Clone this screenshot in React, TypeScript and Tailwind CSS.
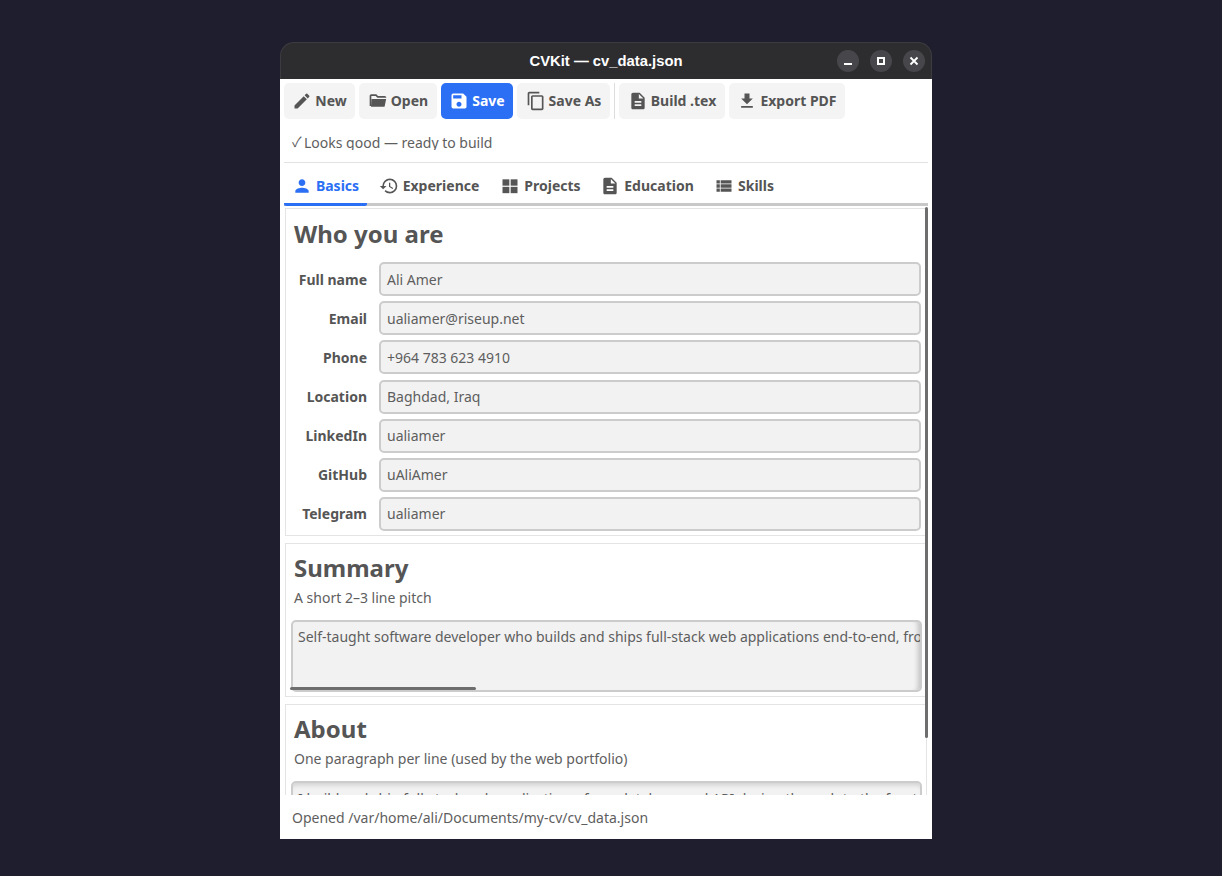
import React from 'react'
import {
  MdEdit,
  MdSave,
  MdContentCopy,
  MdDescription,
  MdFileDownload,
  MdPerson,
  MdHistory,
  MdViewList,
} from 'react-icons/md'

function FolderIcon({ className }: { className?: string }) {
  return (
    <svg viewBox="0 0 24 24" fill="currentColor" className={className}>
      <path d="M4 4h6l2 2h8c1.1 0 2 .9 2 2H11.2L9.2 6H4v12L2 18V6c0-1.1.9-2 2-2z" />
      <path d="M4.2 9.5h17.6L20 18.2c-.1.6-.6.8-1 .8H3.6z" />
    </svg>
  )
}

function GridIcon({ className }: { className?: string }) {
  return (
    <svg viewBox="0 0 24 24" fill="currentColor" className={className}>
      <rect x="3" y="4" width="8.2" height="7.6" />
      <rect x="12.8" y="4" width="8.2" height="7.6" />
      <rect x="3" y="13" width="8.2" height="7.6" />
      <rect x="12.8" y="13" width="8.2" height="7.6" />
    </svg>
  )
}

const toolbar = [
  { label: 'New', icon: MdEdit, w: 'w-[71px]' },
  { label: 'Open', icon: FolderIcon, w: 'w-[78px]' },
  { label: 'Save', icon: MdSave, w: 'w-[72px]', primary: true },
  { label: 'Save As', icon: MdContentCopy, w: 'w-[93px]' },
]

const toolbar2 = [
  { label: 'Build .tex', icon: MdDescription, w: 'w-[106px]' },
  { label: 'Export PDF', icon: MdFileDownload, w: 'w-[116px]' },
]

const tabs = [
  { label: 'Basics', icon: MdPerson, active: true, w: 'w-[83px]' },
  { label: 'Experience', icon: MdHistory, w: 'w-[124px]' },
  { label: 'Projects', icon: GridIcon, w: 'w-[99px]' },
  { label: 'Education', icon: MdDescription, w: 'w-[114px]' },
  { label: 'Skills', icon: MdViewList, w: 'w-[80px]' },
]

const fields = [
  ['Full name', 'Ali Amer'],
  ['Email', 'ualiamer@riseup.net'],
  ['Phone', '+964 783 623 4910'],
  ['Location', 'Baghdad, Iraq'],
  ['LinkedIn', 'ualiamer'],
  ['GitHub', 'uAliAmer'],
  ['Telegram', 'ualiamer'],
]

function ToolButton({ label, icon: Icon, w, primary }: { label: string; icon: React.ComponentType<{ className?: string }>; w: string; primary?: boolean }) {
  return (
    <div
      className={`${w} h-9 rounded-[5px] flex items-center justify-center gap-[3px] text-sm font-bold ${
        primary ? 'bg-[#2b6ff5] text-white' : 'bg-[#f4f4f4] text-[#555555]'
      }`}
    >
      <Icon className="w-5 h-5 shrink-0" />
      <span>{label}</span>
    </div>
  )
}

function WinButton({ children }: { children: React.ReactNode }) {
  return <div className="w-[22px] h-[22px] rounded-full bg-[#47474b] flex items-center justify-center">{children}</div>
}

export default function App() {
  return (
    <div className="min-h-[876px] bg-[#1e1e2e] pt-[42px] pl-[280px] font-['Noto_Sans',sans-serif] overflow-hidden">
      <div className="w-[652px] h-[797px] flex flex-col">
        {/* title bar */}
        <div className="h-[37px] shrink-0 rounded-t-[14px] bg-[#2d2d30] border-t border-x border-[#3c3c40] flex items-center justify-end pr-[6px] gap-[11px] relative">
          <div className="absolute inset-x-0 top-0 h-full flex items-center justify-center text-white text-[14.8px] font-bold font-['Liberation_Sans',sans-serif]">
            CVKit — cv_data.json
          </div>
          <WinButton>
            <div className="w-2 h-[2px] bg-white mt-[5px]" />
          </WinButton>
          <WinButton>
            <div className="w-2 h-2 border-2 border-white" />
          </WinButton>
          <WinButton>
            <svg viewBox="0 0 10 10" className="w-[10px] h-[10px]">
              <path d="M1.5 1.5 L8.5 8.5 M8.5 1.5 L1.5 8.5" stroke="white" strokeWidth="1.8" />
            </svg>
          </WinButton>
        </div>

        <div className="flex-1 min-h-0 bg-white flex flex-col px-1">
          {/* toolbar */}
          <div className="flex items-center gap-1 pt-1 shrink-0">
            {toolbar.map((b) => (
              <ToolButton key={b.label} {...b} />
            ))}
            <div className="w-px h-9 bg-[#dddddd]" />
            {toolbar2.map((b) => (
              <ToolButton key={b.label} {...b} />
            ))}
          </div>

          {/* validation line */}
          <div className="h-[44px] shrink-0 border-b border-[#e2e2e2] pt-[14px] pl-[7px] text-sm text-[#5e5e5e]">
            <div className="h-[17px] leading-[19px] overflow-hidden flex">
              <span className="w-[13px] shrink-0 pl-px font-['Noto_Sans_CJK_SC',sans-serif] leading-[17px]">✓</span>
              <span>Looks good — ready to build</span>
            </div>
          </div>

          {/* tabs */}
          <div className="h-[43px] shrink-0 flex items-end border-b-[3px] border-[#c8c8c8] relative">
            {tabs.map((t) => (
              <div
                key={t.label}
                className={`${t.w} h-[43px] -mb-[3px] pt-[6px] flex items-center justify-center gap-[4px] text-sm font-bold border-b-[3px] ${
                  t.active ? 'text-[#2b6ff5] border-[#2b6ff5] rounded-b-[2px]' : 'text-[#555555] border-transparent'
                }`}
              >
                <t.icon className="w-5 h-5 shrink-0" />
                <span>{t.label}</span>
              </div>
            ))}
          </div>

          {/* scrolling page */}
          <div className="flex-1 min-h-0 overflow-hidden relative pt-[2px] pl-px flex flex-col gap-[7px] text-[#5e5e5e]">
            <div className="absolute right-0 top-[1px] w-[3px] h-[531px] bg-[#6e6e6e] rounded-full z-10" />

            <section className="w-[642px] shrink-0 h-[328px] border border-[#e4e4e4] pl-2 pr-[5px]">
              <h2 className="text-2xl font-bold leading-[32px] mt-[9px] mb-[12.15px] text-[#555555]">Who you are</h2>
              <div className="flex flex-col gap-[5.14px]">
                {fields.map(([label, value]) => (
                  <div key={label} className="flex items-center">
                    <label className="w-[73px] pt-[0.8px] text-right text-sm font-bold shrink-0 text-[#555555]">{label}</label>
                    <div className="ml-3 flex-1 h-[34px] rounded-[5px] border-2 border-[#cccccc] bg-[#f2f2f2] flex items-center px-[6px] pt-[0.8px] text-sm">
                      {value}
                    </div>
                  </div>
                ))}
              </div>
            </section>

            <section className="w-[642px] shrink-0 h-[154px] border border-[#e4e4e4] pl-2 relative">
              <h2 className="text-2xl font-bold leading-[32px] mt-[8px] text-[#555555]">Summary</h2>
              <p className="text-sm leading-[20px] mt-[4px]">A short 2–3 line pitch</p>
              <div className="absolute left-[5px] top-[76px] w-[631px] h-[72px] rounded-[5px] border-2 border-[#cccccc] bg-[#f2f2f2] pl-[5px] pt-[5px] text-sm leading-[20px] whitespace-nowrap overflow-hidden shadow-[inset_-6px_0_5px_-4px_rgba(0,0,0,0.2)]">
                Self-taught software developer who builds and ships full-stack web applications end-to-end, from database to deployment
              </div>
              <div className="absolute left-[4px] top-[143px] w-[186px] h-[3px] bg-[#6e6e6e] rounded-full" />
            </section>

            <section className="w-[642px] shrink-0 h-[154px] border border-[#e4e4e4] pl-2 relative">
              <h2 className="text-2xl font-bold leading-[32px] mt-[8px] text-[#555555]">About</h2>
              <p className="text-sm leading-[20px] mt-[4px]">One paragraph per line (used by the web portfolio)</p>
              <div className="absolute left-[5px] top-[76px] w-[631px] h-[72px] rounded-[5px] border-2 border-[#cccccc] bg-[#f2f2f2] pl-[5px] pt-[6px] text-sm leading-[20px] whitespace-nowrap overflow-hidden shadow-[inset_0_6px_5px_-4px_rgba(0,0,0,0.15)]">
                I build and ship full-stack web applications, from database and API design through to the frontend and deployment
              </div>
            </section>
          </div>

          {/* status bar */}
          <div className="h-[44px] shrink-0 flex items-center pl-2 pt-[2px] text-sm text-[#5e5e5e]">
            Opened /var/home/ali/Documents/my-cv/cv_data.json
          </div>
        </div>
      </div>
    </div>
  )
}
